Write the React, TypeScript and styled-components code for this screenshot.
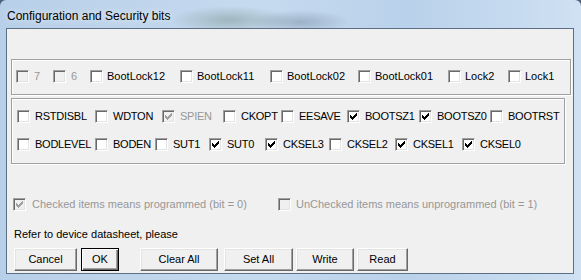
import styled, { createGlobalStyle } from "styled-components";

const GlobalStyle = createGlobalStyle`
  html, body {
    margin: 0;
    padding: 0;
    background: #50627a;
  }
  * {
    box-sizing: border-box;
  }
`;

const Window = styled.div`
  width: 581px;
  height: 280px;
  display: flex;
  flex-direction: column;
  border-radius: 6px 6px 0 0;
  overflow: hidden;
  background:
    radial-gradient(ellipse 60px 14px at 230px 20px, rgba(90, 120, 100, 0.35), transparent),
    radial-gradient(ellipse 50px 12px at 300px 22px, rgba(70, 90, 110, 0.3), transparent),
    linear-gradient(to right, #b7cfe8, #c6daef 45%, #b9d1ea 70%, #cfe1f3);
  font-family: "Liberation Sans", Arial, sans-serif;
`;

const TitleBar = styled.div`
  height: 28px;
  flex: none;
  display: flex;
  align-items: center;
  padding: 3px 0 0 7px;
  font-size: 12px;
  color: #000;
  text-shadow: 0 0 6px rgba(255, 255, 255, 0.9);
`;

const Frame = styled.div`
  flex: 1;
  display: flex;
  padding: 0 7px 6px 6px;
`;

const Client = styled.div`
  flex: 1;
  display: flex;
  flex-direction: column;
  align-items: flex-start;
  background: #f0f0f0;
  border: 1px solid #5d6f84;
  padding: 30px 0 0 4px;
  font-size: 11px;
  line-height: 13px;
`;

const Group = styled.div<{ $w: number; $h: number }>`
  width: ${(p) => p.$w}px;
  height: ${(p) => p.$h}px;
  border: 1px solid #a0a0a0;
  box-shadow: 1px 1px 0 #fff, inset 1px 1px 0 #fff;
  display: flex;
  flex-direction: column;
  justify-content: center;
  padding: 0 0 1px 4px;
`;

const FuseGroup = styled(Group)`
  justify-content: flex-start;
  margin-top: 3px;
  padding: 3px 0 0 5px;
  letter-spacing: -0.25px;
`;

const Row = styled.div<{ $h?: number }>`
  display: flex;
  align-items: center;
  height: ${(p) => p.$h ?? 13}px;
`;

const Item = styled.div<{ $w?: number; $gap?: number }>`
  display: flex;
  align-items: center;
  flex: none;
  width: ${(p) => (p.$w ? `${p.$w}px` : "auto")};
  gap: ${(p) => p.$gap ?? 4}px;
  white-space: nowrap;
`;

const Label = styled.span<{ $disabled?: boolean }>`
  color: ${(p) => (p.$disabled ? "#979797" : "#000")};
`;

const Box = styled.span<{ $disabled?: boolean }>`
  width: 13px;
  height: 13px;
  flex: none;
  display: block;
  border: 1px solid;
  border-color: #a0a0a0 #fff #fff #a0a0a0;
  box-shadow: inset 1px 1px 0 #696969, inset -1px -1px 0 #e3e3e3;
  background: ${(p) => (p.$disabled ? "#f0f0f0" : "#fff")};
  color: ${(p) => (p.$disabled ? "#a0a0a0" : "#000")};
  svg {
    display: block;
  }
`;

const LegendRow = styled(Row)`
  margin-top: 34px;
  padding-left: 2px;
`;

const Note = styled.div`
  margin-top: 17px;
  padding-left: 3px;
  color: #000;
`;

const ButtonRow = styled.div`
  display: flex;
  margin-top: 7px;
  padding-left: 3px;
`;

const Button = styled.button<{ $w: number; $gap?: number; $default?: boolean }>`
  width: ${(p) => p.$w}px;
  height: 23px;
  margin-left: ${(p) => p.$gap ?? 0}px;
  padding: 0 0 1px;
  font-family: "Liberation Sans", Arial, sans-serif;
  font-size: 11px;
  color: #000;
  background: #f0f0f0;
  border: 1px solid;
  border-color: ${(p) =>
    p.$default ? "#000" : "#fff #696969 #696969 #fff"};
  box-shadow: ${(p) =>
    p.$default
      ? "inset 1px 1px 0 #fff, inset -1px -1px 0 #696969, inset -2px -2px 0 #a0a0a0"
      : "inset -1px -1px 0 #a0a0a0, inset 1px 1px 0 #e3e3e3"};
`;

const CHECK =
  "M8 2h1v1h-1z M7 3h2v1h-2z M2 4h1v1h-1z M6 4h3v1h-3z M2 5h2v1h-2z M5 5h3v1h-3z M2 6h5v1h-5z M3 7h3v1h-3z M4 8h1v1h-1z";

type CheckProps = {
  label: string;
  checked?: boolean;
  disabled?: boolean;
  w?: number;
  gap?: number;
};

const Check = ({ label, checked, disabled, w, gap }: CheckProps) => (
  <Item $w={w} $gap={gap}>
    <Box $disabled={disabled}>
      {checked && (
        <svg width="11" height="11" viewBox="0 0 11 11" shapeRendering="crispEdges">
          <path d={CHECK} fill="currentColor" />
        </svg>
      )}
    </Box>
    <Label $disabled={disabled}>{label}</Label>
  </Item>
);

const lockBits: CheckProps[] = [
  { label: "7", disabled: true, w: 37, gap: 5 },
  { label: "6", disabled: true, w: 37, gap: 5 },
  { label: "BootLock12", w: 90 },
  { label: "BootLock11", w: 90 },
  { label: "BootLock02", w: 88 },
  { label: "BootLock01", w: 90 },
  { label: "Lock2", w: 60 },
  { label: "Lock1" },
];

const fuseHigh: CheckProps[] = [
  { label: "RSTDISBL", w: 78 },
  { label: "WDTON", w: 67 },
  { label: "SPIEN", checked: true, disabled: true, w: 61 },
  { label: "CKOPT", w: 58 },
  { label: "EESAVE", w: 66 },
  { label: "BOOTSZ1", checked: true, w: 72 },
  { label: "BOOTSZ0", checked: true, w: 71 },
  { label: "BOOTRST" },
];

const fuseLow: CheckProps[] = [
  { label: "BODLEVEL", w: 78 },
  { label: "BODEN", w: 60 },
  { label: "SUT1", w: 54 },
  { label: "SUT0", checked: true, w: 56 },
  { label: "CKSEL3", checked: true, w: 64 },
  { label: "CKSEL2", w: 66 },
  { label: "CKSEL1", checked: true, w: 67 },
  { label: "CKSEL0", checked: true },
];

export default function App() {
  return (
    <>
      <GlobalStyle />
      <Window>
        <TitleBar>Configuration and Security bits</TitleBar>
        <Frame>
          <Client>
            <Group $w={560} $h={36}>
              <Row>
                {lockBits.map((b) => (
                  <Check key={b.label} {...b} />
                ))}
              </Row>
            </Group>
            <FuseGroup $w={554} $h={66}>
              <Row $h={28}>
                {fuseHigh.map((b) => (
                  <Check key={b.label} gap={5} {...b} />
                ))}
              </Row>
              <Row $h={28}>
                {fuseLow.map((b) => (
                  <Check key={b.label} gap={5} {...b} />
                ))}
              </Row>
            </FuseGroup>
            <LegendRow>
              <Check
                label="Checked items means programmed (bit = 0)"
                checked
                disabled
                w={265}
                gap={6}
              />
              <Check
                label="UnChecked items means unprogrammed (bit = 1)"
                disabled
                gap={5}
              />
            </LegendRow>
            <Note>Refer to device datasheet, please</Note>
            <ButtonRow>
              <Button $w={63}>Cancel</Button>
              <Button $w={38} $gap={4} $default>
                OK
              </Button>
              <Button $w={78} $gap={21}>
                Clear All
              </Button>
              <Button $w={69} $gap={6}>
                Set All
              </Button>
              <Button $w={58} $gap={3}>
                Write
              </Button>
              <Button $w={51} $gap={3}>
                Read
              </Button>
            </ButtonRow>
          </Client>
        </Frame>
      </Window>
    </>
  );
}
